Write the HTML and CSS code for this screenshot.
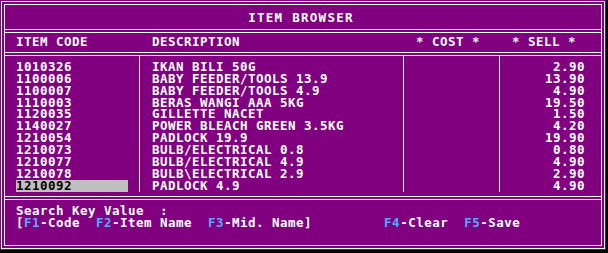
FILE: index.html
```html
<!DOCTYPE html>
<html>
<head>
<meta charset="utf-8">
<title>Item Browser</title>
<link rel="stylesheet" href="styles.css">
</head>
<body>
<div class="screen">
  <div class="frame-outer">
    <div class="frame">
      <div class="title">ITEM BROWSER</div>
      <div class="dbl"></div>
      <div class="cols head">
        <div class="col c-code">ITEM CODE</div>
        <div class="col c-desc">DESCRIPTION</div>
        <div class="col c-cost">* COST *</div>
        <div class="col c-sell">* SELL *</div>
      </div>
      <div class="dbl"></div>
      <div class="cols list">
        <div class="col c-code">
          <div class="code">1010326</div>
          <div class="code">1100006</div>
          <div class="code">1100007</div>
          <div class="code">1110003</div>
          <div class="code">1120035</div>
          <div class="code">1140027</div>
          <div class="code">1210054</div>
          <div class="code">1210073</div>
          <div class="code">1210077</div>
          <div class="code">1210078</div>
          <div class="code sel">1210092</div>
        </div>
        <div class="col c-desc">
          <div>IKAN BILI 50G</div>
          <div>BABY FEEDER/TOOLS 13.9</div>
          <div>BABY FEEDER/TOOLS 4.9</div>
          <div>BERAS WANGI AAA 5KG</div>
          <div>GILLETTE NACET</div>
          <div>POWER BLEACH GREEN 3.5KG</div>
          <div>PADLOCK 19.9</div>
          <div>BULB/ELECTRICAL 0.8</div>
          <div>BULB/ELECTRICAL 4.9</div>
          <div>BULB\ELECTRICAL 2.9</div>
          <div>PADLOCK 4.9</div>
        </div>
        <div class="col c-cost"></div>
        <div class="col c-sell">
          <div>2.90</div>
          <div>13.90</div>
          <div>4.90</div>
          <div>19.50</div>
          <div>1.50</div>
          <div>4.20</div>
          <div>19.90</div>
          <div>0.80</div>
          <div>4.90</div>
          <div>2.90</div>
          <div>4.90</div>
        </div>
      </div>
      <div class="dbl"></div>
      <div class="footer">
        <div class="line">Search Key Value  :</div>
        <div class="line">[<span class="key">F1</span>-Code  <span class="key">F2</span>-Item Name  <span class="key">F3</span>-Mid. Name]         <span class="key">F4</span>-Clear  <span class="key">F5</span>-Save</div>
      </div>
    </div>
  </div>
</div>
</body>
</html>
```
FILE: styles.css
```css
html, body {
  margin: 0;
  padding: 0;
  background: #000;
}
body {
  width: 608px;
  height: 253px;
  overflow: hidden;
  font-family: "DejaVu Sans Mono", monospace;
  font-weight: bold;
  font-size: 12.5px;
  line-height: 11.9px;
  letter-spacing: 0.475px;
  color: #fff;
}
.screen {
  width: 606px;
  height: 250px;
  background: #800080;
  padding: 1px;
  box-sizing: border-box;
}
.frame-outer {
  height: 100%;
  border: 1px solid #fff;
  padding: 2px;
  box-sizing: border-box;
}
.frame {
  height: 100%;
  border: 1px solid #fff;
  box-sizing: border-box;
  display: flex;
  flex-direction: column;
}
.frame > * {
  flex: none;
}
.title {
  height: 24px;
  padding-top: 6.8px;
  padding-right: 4px;
  box-sizing: border-box;
  text-align: center;
  letter-spacing: 1.275px;
}
.dbl {
  height: 4px;
  border-top: 1px solid #fff;
  border-bottom: 1px solid #fff;
  box-sizing: border-box;
}
.cols {
  display: grid;
  grid-template-columns: 135px 264px 96px 101px;
}
.head {
  height: 19px;
  padding-top: 2.8px;
  box-sizing: border-box;
}
.col {
  padding-left: 12px;
  box-sizing: border-box;
}
.col.c-code {
  padding-left: 11px;
}
.list {
  height: 140px;
  padding-bottom: 4px;
  box-sizing: border-box;
}
.list .col {
  padding-top: 4.8px;
  border-right: 1px solid #fff;
}
.list .col.c-sell {
  border-right: none;
  padding-left: 0;
  padding-right: 16px;
  text-align: right;
}
.code {
  width: 112px;
}
.code.sel {
  background: #c0c0c0;
  color: #000;
}
.footer {
  flex: 1 1 auto;
  padding: 4.8px 0 0 11px;
}
.line {
  white-space: pre;
}
.key {
  color: #55aaff;
}
```
